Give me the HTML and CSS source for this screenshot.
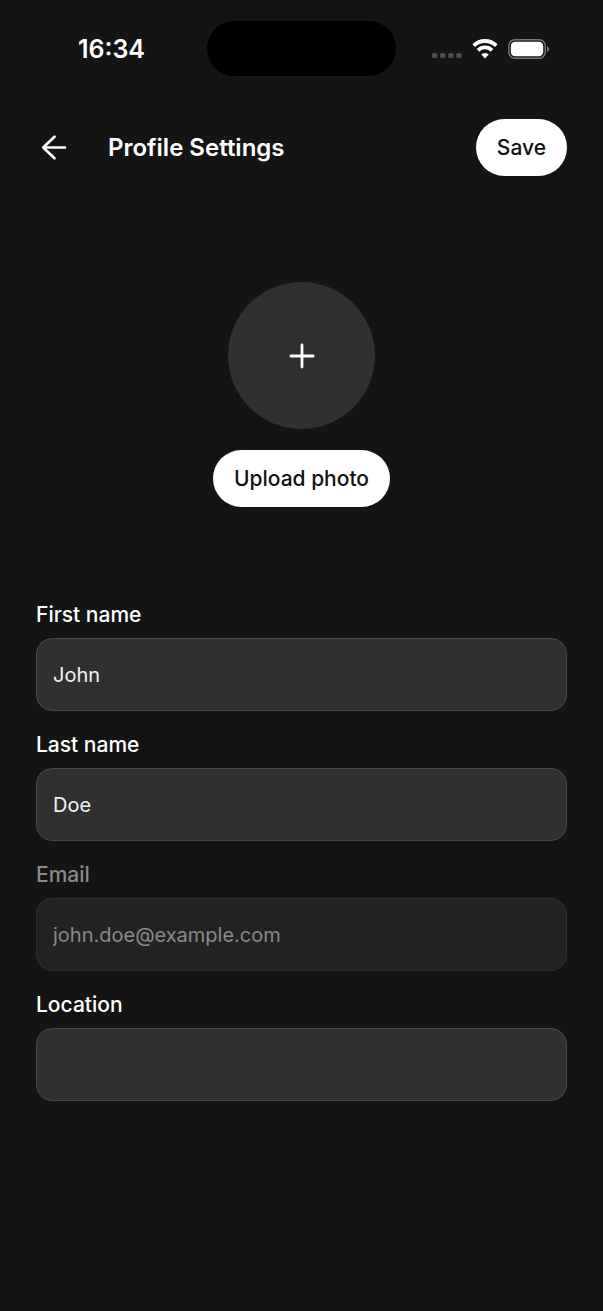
FILE: index.html
```html
<!DOCTYPE html>
<html lang="en">
<head>
<meta charset="utf-8">
<meta name="viewport" content="width=device-width, initial-scale=1">
<title>Profile Settings</title>
<link rel="stylesheet" href="styles.css">
</head>
<body>
<div class="status-bar">
  <time class="clock">16:34</time>
  <div class="island"></div>
  <div class="status-icons">
    <svg class="signal" width="30" height="6" viewBox="0 0 30 6" fill="#505050" aria-hidden="true">
      <rect x="0" y="0" width="5.3" height="5" rx="1.5"/><rect x="8.1" y="0" width="5.3" height="5" rx="1.5"/><rect x="16.2" y="0" width="5.3" height="5" rx="1.5"/><rect x="24.3" y="0" width="5.3" height="5" rx="1.5"/>
    </svg>
    <svg width="26" height="20" viewBox="0 0 26 20" fill="none" stroke="#fff" stroke-width="3.8" aria-hidden="true">
      <path d="M1.7 6.6a16.2 16.2 0 0 1 22.6 0"/>
      <path d="M6 11.300a10 10 0 0 1 14 0"/>
      <path d="M13 19.400l-3.800-3.900a5.300 5.300 0 0 1 7.600 0z" fill="#fff" stroke="none"/>
    </svg>
    <svg width="42" height="20" viewBox="0 0 42 20" aria-hidden="true">
      <rect x="0.8" y="0.8" width="36.4" height="18.4" rx="6" fill="none" stroke="#777" stroke-width="1.4"/>
      <rect x="2.8" y="2.8" width="32.4" height="14.4" rx="4.2" fill="#fff"/>
      <path d="M39 7v6c1.200-.5 2-1.600 2-3s-.8-2.500-2-3z" fill="#777"/>
    </svg>
  </div>
</div>

<header class="header">
  <button class="back" type="button" aria-label="Back">
    <svg width="26" height="26" viewBox="0 0 26 26" fill="none" stroke="#fff" stroke-width="2.6" stroke-linecap="round" stroke-linejoin="round" aria-hidden="true"><path d="M24 12.500H2.200M13.500 1.700L2.200 12.500 13.500 23.300"/></svg>
  </button>
  <h1 class="title">Profile Settings</h1>
  <button class="pill" type="submit" form="profile">Save</button>
</header>

<main>
  <section class="photo">
    <button class="avatar" type="button" aria-label="Add photo">
      <svg width="26" height="26" viewBox="0 0 26 26" fill="none" stroke="#fff" stroke-width="2.8" stroke-linecap="round" aria-hidden="true"><path d="M13 1.900v22.200M1.900 13h22.200"/></svg>
    </button>
    <button class="pill" type="button">Upload photo</button>
  </section>

  <form class="form" id="profile">
    <div class="field">
      <label for="first">First name</label>
      <input id="first" type="text" value="John">
    </div>
    <div class="field">
      <label for="last">Last name</label>
      <input id="last" type="text" value="Doe">
    </div>
    <div class="field field-disabled">
      <label for="email">Email</label>
      <input id="email" type="email" value="john.doe@example.com" disabled>
    </div>
    <div class="field">
      <label for="location">Location</label>
      <input id="location" type="text">
    </div>
  </form>
</main>
</body>
</html>
```
FILE: styles.css
```css
* {
  box-sizing: border-box;
}

body {
  margin: 0;
  min-height: 100vh;
  background: #141414;
  color: #fff;
  font-family: Inter, "Liberation Sans", sans-serif;
  font-size: 21px;
  line-height: 26px;
}

button,
input {
  font: inherit;
}

button {
  border: 0;
  padding: 0;
  background: none;
  color: inherit;
  cursor: pointer;
}

svg {
  display: block;
}

.status-bar {
  display: grid;
  grid-template-columns: 1fr auto 1fr;
  align-items: center;
  padding: 21px 0 0;
}

.clock {
  padding-right: 62px;
  text-align: right;
  font-size: 25px;
  font-weight: 600;
}

.island {
  width: 189px;
  height: 55px;
  border-radius: 28px;
  background: #000;
}

.status-icons {
  display: flex;
  align-items: center;
  gap: 10px;
  padding-left: 36px;
}

.signal {
  align-self: flex-end;
}

.header {
  display: flex;
  align-items: center;
  padding: 43px 36px 0;
}

.back {
  padding: 5px;
}

.title {
  flex: 1;
  margin: 0 0 0 36px;
  font-size: 24px;
  font-weight: 600;
}

.pill {
  height: 57px;
  padding: 0 21px;
  border-radius: 29px;
  background: #fff;
  color: #111;
  font-weight: 500;
}

.photo {
  display: flex;
  flex-direction: column;
  align-items: center;
  gap: 21px;
  padding-top: 106px;
}

.avatar {
  display: grid;
  place-items: center;
  width: 147px;
  height: 147px;
  border-radius: 50%;
  background: #303030;
}

.form {
  display: flex;
  flex-direction: column;
  gap: 21px;
  padding: 95px 36px 36px;
}

.field {
  display: flex;
  flex-direction: column;
  gap: 10px;
}

.field label {
  font-weight: 500;
}

.field input {
  width: 100%;
  height: 73px;
  padding: 0 16px;
  border: 1px solid #484848;
  border-radius: 16px;
  background: #303030;
  color: #f2f2f2;
  font-size: 20px;
}

.field-disabled label {
  color: #8a8a8a;
}

.field-disabled input {
  border-color: #2f2f2f;
  background: #222;
  color: #8a8a8a;
}
```
